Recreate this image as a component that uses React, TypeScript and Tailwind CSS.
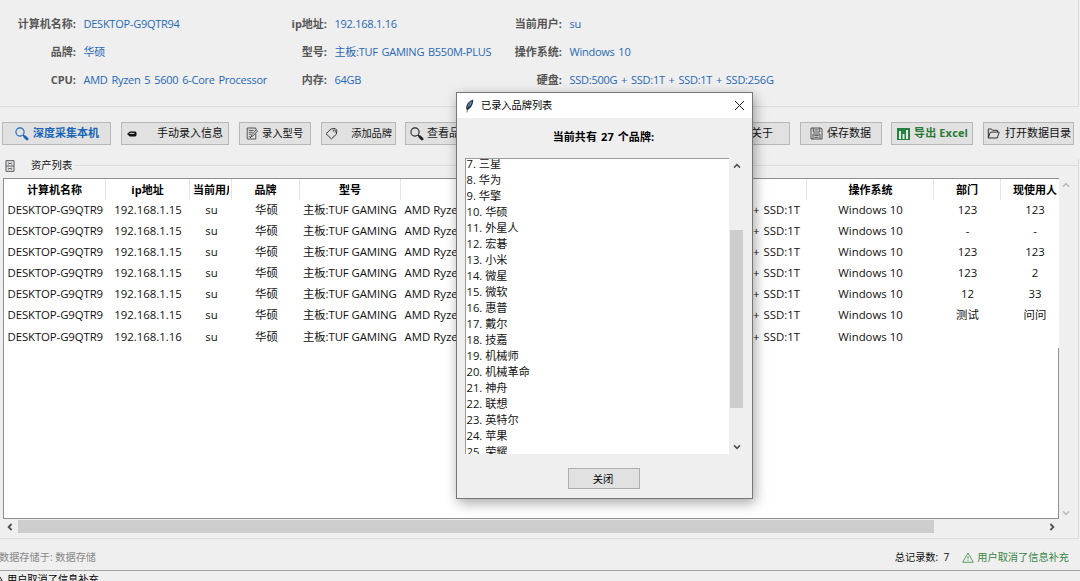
import type { ReactNode } from "react"
import clsx from "clsx"

const info = [
  ["计算机名称:", "DESKTOP-G9QTR94", "ip地址:", "192.168.1.16", "当前用户:", "su"],
  ["品牌:", "华硕", "型号:", "主板:TUF GAMING B550M-PLUS", "操作系统:", "Windows 10"],
  ["CPU:", "AMD Ryzen 5 5600 6-Core Processor", "内存:", "64GB", "硬盘:", "SSD:500G + SSD:1T + SSD:1T + SSD:256G"],
]

const headers = ["计算机名称", "ip地址", "当前用户", "品牌", "型号", "CPU", "硬盘", "操作系统", "部门", "现使用人"]

const rows = [
  { ip: "192.168.1.15", dept: "123", user: "123" },
  { ip: "192.168.1.15", dept: "-", user: "-" },
  { ip: "192.168.1.15", dept: "123", user: "123" },
  { ip: "192.168.1.15", dept: "123", user: "2" },
  { ip: "192.168.1.15", dept: "12", user: "33" },
  { ip: "192.168.1.15", dept: "测试", user: "问问" },
  { ip: "192.168.1.16", dept: "", user: "" },
]

const brands = [
  "7. 三星", "8. 华为", "9. 华擎", "10. 华硕", "11. 外星人", "12. 宏碁", "13. 小米", "14. 微星", "15. 微软", "16. 惠普",
  "17. 戴尔", "18. 技嘉", "19. 机械师", "20. 机械革命", "21. 神舟", "22. 联想", "23. 英特尔", "24. 苹果", "25. 荣耀",
]

const columns = "grid grid-cols-[102px_84px_42px_68px_101px_199px_207px_127px_67px_58px]"

function Magnifier({ className }: { className?: string }) {
  return (
    <svg width="14" height="14" viewBox="0 0 14 14" fill="none" stroke="currentColor" className={className}>
      <circle cx="5" cy="5" r="4.1" strokeWidth="1.1" />
      <path d="M8 8l1.5 1.5" strokeWidth="1.2" />
      <path d="M9.8 9.8l2.3 2.3" strokeWidth="2.8" strokeLinecap="round" />
    </svg>
  )
}

function Pencil() {
  return (
    <svg width="10" height="6" viewBox="0 0 10 6">
      <path d="M0 3l2.8-2.4h5.4a1.4 1.4 0 0 1 1.3 1.4v2a1.4 1.4 0 0 1-1.3 1.4H2.8z" fill="#111" />
      <path d="M2.4 2.4h5" stroke="#ddd" strokeWidth="1" />
    </svg>
  )
}

function Memo() {
  return (
    <svg width="12" height="13" viewBox="0 0 12 13" fill="none" stroke="#444" strokeWidth=".9">
      <path d="M9.8 6.5V12H1.2V1h8.6v1.5M2.8 3.4h5M2.8 5.3h3.8M2.8 7.2h2.4M2.8 9.8h1.8" />
      <path d="M5.2 9.8l.6-2 4.4-5 1.4 1.1-4.5 5zM5.2 9.8L4 11" />
    </svg>
  )
}

function Tag() {
  return (
    <svg width="13" height="13" viewBox="0 0 13 13" fill="none" stroke="#333" strokeWidth="1">
      <path d="M6 2l4-.6 1.8 1.8-.4 4-5 4.7L1 6.7z" strokeLinejoin="round" />
      <path d="M8.2 4.6c-.2-1.2.6-1.9 1.6-1.5.9.4.9 1.6.2 2.4" />
    </svg>
  )
}

function Floppy() {
  return (
    <svg width="13" height="13" viewBox="0 0 13 13" fill="none" stroke="#444" strokeWidth=".9">
      <path d="M1 1h10l1 1v10H1zM3.3 1v4h6.4V1M3 12V7h7v5M4.5 2.9h4M4.3 8.6h4.4M4.3 10.3h4.4" />
    </svg>
  )
}

function Chart() {
  return (
    <svg width="13" height="12" viewBox="0 0 13 12">
      <path d="M0 0h13v12H0z" fill="#268040" />
      <path d="M2 3h2v8H2zM5.5 6h2v5h-2zM9 2h2v9H9z" fill="#e4e9e4" />
    </svg>
  )
}

function Folder() {
  return (
    <svg width="13" height="11" viewBox="0 0 13 11" fill="none" stroke="#333" strokeWidth="1" strokeLinejoin="round">
      <path d="M1.3 10V1h3.2l1 1.3h5v1.8M1.3 10l2.1-5.9h8.8L10.3 10z" />
    </svg>
  )
}

function Cabinet() {
  return (
    <svg width="10" height="12" viewBox="0 0 10 12" fill="none" stroke="#555" strokeWidth="1">
      <path d="M1 .7h8v10.6H1zM1 6h8" />
      <path d="M3.3 2.3v2.4M6.7 2.3v2.4M3.3 7.5v2.4M6.7 7.5v2.4" stroke="#6f7c88" />
      <path d="M4 3.4h2M4 8.6h2" />
    </svg>
  )
}

function Feather() {
  return (
    <svg width="9" height="14" viewBox="0 0 9 14">
      <path d="M8.2.4C5 1.2 1.6 4.4 1.2 7.8c-.1 1.2 0 2 .7 3.2C5.6 9.8 8.6 5 8.2.4z" fill="#1d2f42" />
      <path d="M7.4 1.2C4.6 2.8 2.4 5.4 2.2 9.3 4.8 7.5 6.9 4.6 7.4 1.2z" fill="#7db4e4" />
      <path d="M7 2C4.3 5 2.5 8.5 1.9 13.4" stroke="#111" strokeWidth=".6" fill="none" />
    </svg>
  )
}

function Chevron({ d, color = "#505050", width = 1.5 }: { d: string; color?: string; width?: number }) {
  return (
    <svg width="8" height="8" viewBox="0 0 8 8" fill="none" stroke={color} strokeWidth={width} className="shrink-0">
      <path d={d} />
    </svg>
  )
}

const UP = "M1 5.6l3-3 3 3"
const DOWN = "M1 2.4l3 3 3-3"
const LEFT = "M5.6 1l-3 3 3 3"
const RIGHT = "M2.4 1l3 3-3 3"

function ToolButton({ className, children }: { className?: string; children?: ReactNode }) {
  return (
    <button
      className={clsx(
        "flex h-[23px] shrink-0 items-center border border-[#b7b7b7] bg-[#e1e1e1] text-[11px] whitespace-nowrap text-[#111]",
        className
      )}
    >
      {children}
    </button>
  )
}

function Cell({ className, children }: { className?: string; children?: ReactNode }) {
  return <div className={clsx("overflow-hidden whitespace-nowrap", className)}>{children}</div>
}

function BrandDialog() {
  return (
    <div className="absolute top-[92px] left-[456px] flex h-[407px] w-[297px] flex-col border border-[#777] bg-[#efefef] shadow-[2px_4px_12px_rgba(0,0,0,0.35)]">
      {/* Title bar */}
      <div className="flex h-[25px] shrink-0 items-center bg-white pr-[7px] pl-[8px]">
        <Feather />
        <span className="ml-[7px] text-[10.2px] text-black">已录入品牌列表</span>
        <svg width="11" height="11" viewBox="0 0 11 11" stroke="#222" strokeWidth="1" className="ml-auto">
          <path d="M1 1l9 9M10 1l-9 9" />
        </svg>
      </div>
      <div className="flex h-[40px] shrink-0 items-center justify-center pr-[2px] pb-[2px] text-[11px] font-bold tracking-[0.1px] text-black [word-spacing:1px]">
        当前共有 27 个品牌:
      </div>

      {/* Brand list */}
      <div className="ml-[8px] flex h-[296px] shrink-0">
        <div className="w-[264px] overflow-hidden border-t border-l border-[#9a9a9a] bg-white pl-px">
          <div className="-mt-[3px] -ml-[0.5px] text-[11.2px] leading-[16px] text-[#111]">
            {brands.map((brand) => (
              <div key={brand}>{brand}</div>
            ))}
          </div>
        </div>
        <div className="flex w-[15px] flex-col items-center pt-[4px] pb-[3px]">
          <Chevron d={UP} />
          <div className="mt-[60px] h-[178px] w-[13px] bg-[#cdcdcd]" />
          <div className="mt-auto flex">
            <Chevron d={DOWN} />
          </div>
        </div>
      </div>

      <button className="mt-[14px] ml-[111px] h-[21px] w-[72px] border border-[#adadad] bg-[#e1e1e1] pr-[2px] text-[10.3px] leading-[18px] text-black">
        关闭
      </button>
    </div>
  )
}

export default function App() {
  return (
    <div className="relative flex h-[581px] w-[1080px] flex-col overflow-hidden bg-[#efefef] font-['Open_Sans','Noto_Sans_CJK_SC',sans-serif] text-[11px] text-[#111]">
      {/* Computer info */}
      <section className="mr-px grid h-[107px] shrink-0 grid-cols-[76px_204px_47px_180px_55px_1fr] content-start border-r border-b border-[#dcdcdc] pt-[10px]">
        {info.flat().map((text, i) => (
          <div
            key={i}
            className={clsx(
              "h-[28px] leading-[28px] whitespace-nowrap",
              i % 2 === 0
                ? "text-right font-bold text-[#555]"
                : "pl-[7.5px] tracking-[-0.25px] text-[#1f68b5] [word-spacing:1.2px]"
            )}
          >
            {text}
          </div>
        ))}
      </section>

      {/* Toolbar */}
      <div className="flex h-[52px] shrink-0 items-start pt-[15px] pl-[2px]">
        <ToolButton className="w-[109px] pl-[12px] font-bold !text-[#1763b6]">
          <Magnifier className="mr-[4px]" />
          深度采集本机
        </ToolButton>
        <ToolButton className="ml-[10px] w-[108px] justify-between pr-[5px] pl-[5px]">
          <Pencil />
          手动录入信息
        </ToolButton>
        <ToolButton className="ml-[10px] w-[72px] pl-[6px]">
          <Memo />
          <span className="ml-[4px] text-[10.3px]">录入型号</span>
        </ToolButton>
        <ToolButton className="ml-[10px] w-[75px] justify-between pr-[3px] pl-[3px]">
          <Tag />
          <span className="text-[10.2px]">添加品牌</span>
        </ToolButton>
        <ToolButton className="ml-[9px] w-[82px] pl-[4px] !text-[#222]">
          <Magnifier className="mr-[3px]" />
          查看品牌
        </ToolButton>
        <ToolButton className="mr-[10px] ml-auto w-[72px] justify-end pr-[16px]">关于</ToolButton>
        <ToolButton className="w-[82px] pl-[9px]">
          <Floppy />
          <span className="ml-[4px]">保存数据</span>
        </ToolButton>
        <ToolButton className="ml-[9px] w-[82px] pl-[5px] font-bold !text-[#2b7b35]">
          <Chart />
          <span className="ml-[4px] tracking-[0.15px]">导出 Excel</span>
        </ToolButton>
        <ToolButton className="mr-[6px] ml-[10px] w-[91px] pl-[3px]">
          <Folder />
          <span className="ml-[5px]">打开数据目录</span>
        </ToolButton>
      </div>

      {/* Asset list */}
      <section className="mr-px flex h-[380px] shrink-0 flex-col border-r border-b border-[#dcdcdc]">
        <div className="flex h-[13px] shrink-0 items-center pl-[5px]">
          <Cabinet />
          <span className="mr-[2px] ml-[16px] text-[10.3px] leading-none">资产列表</span>
          <div className="h-px flex-1 bg-[#dcdcdc]" />
        </div>
        <div className="mt-[6px] ml-[3px] flex h-[341px] shrink-0">
          <div className="relative flex w-[1056px] flex-col border-t border-b border-l border-[#8f8f8f] bg-white">
            <div className={clsx(columns, "h-[21px] shrink-0 overflow-hidden font-bold text-black")}>
              {headers.map((h) => (
                <div
                  key={h}
                  className={clsx(
                    "overflow-hidden border-r border-[#e5e5e5] text-center leading-[21px] whitespace-nowrap last:border-r-0",
                    h === "当前用户" && "pr-[2px] pl-[3px]",
                    h === "操作系统" && "pl-px",
                    h === "现使用人" && "pl-[10px]"
                  )}
                >
                  <div className="overflow-hidden">{h}</div>
                </div>
              ))}
            </div>
            {rows.map((row, i) => (
              <div key={i} className={clsx(columns, "h-[21.1px] shrink-0 overflow-hidden text-[11.4px] leading-[20.6px]")}>
                <Cell className="mr-[3px] pl-[3.5px] tracking-[-0.1px]">DESKTOP-G9QTR94</Cell>
                <Cell className="text-center">{row.ip}</Cell>
                <Cell className="pl-px text-center">su</Cell>
                <Cell className="pl-px text-center">华硕</Cell>
                <Cell className="mr-[2px] pl-[3px] tracking-[-0.1px]">主板:TUF GAMING B550M-PLUS</Cell>
                <Cell className="mr-[3px] pl-[3.5px]">AMD Ryzen 5 5600 6-Core Processor</Cell>
                <Cell className="pr-[7px] text-right [word-spacing:1px]">SSD:500G + SSD:1T + SSD:1T</Cell>
                <Cell className="text-center">Windows 10</Cell>
                <Cell className="text-center">{row.dept}</Cell>
                <div className="pl-[10px] text-center">{row.user}</div>
              </div>
            ))}
            {/* Right edge is only visible below the last row */}
            <div className="ml-auto w-px flex-1 bg-[#8f8f8f]" />
          </div>
          <div className="flex flex-1 flex-col items-center justify-between pt-[3px] pr-[5px] pb-[2px]">
            <Chevron d={UP} color="#bcbcbc" />
            <Chevron d={DOWN} color="#bcbcbc" />
          </div>
        </div>
        <div className="mt-px ml-[3px] flex h-[13px] w-[1056px] shrink-0 items-center pr-[3px] pl-[3px]">
          <Chevron d={LEFT} width={1.8} />
          <div className="ml-[4px] h-[13px] w-[916px] bg-[#cdcdcd]" />
          <div className="ml-auto">
            <Chevron d={RIGHT} width={1.8} />
          </div>
        </div>
      </section>

      {/* Status line */}
      <footer className="flex h-[32px] shrink-0 items-center border-b border-[#a5a5a5] pt-[6px] pr-[11px] text-[10.2px]">
        <span className="-ml-px text-[#888]">数据存储于: 数据存储</span>
        <span className="ml-auto">总记录数:&nbsp; 7</span>
        <svg width="12" height="11" viewBox="0 0 12 11" fill="none" stroke="#4c9656" strokeWidth=".9" className="mr-[3px] ml-[13px]">
          <path d="M6 1L11.3 10.3H.7zM6 4v3.2M6 8.2v.9" />
        </svg>
        <span className="text-[#378443]">用户取消了信息补充</span>
      </footer>
      <div className="flex h-[10px] shrink-0 items-start overflow-hidden pt-px text-[10.2px] leading-[14px] text-black">
        <svg width="3" height="11" viewBox="0 0 3 11" fill="none" stroke="#222" className="mr-[4px]">
          <path d="M0 5l2.2 4H0" />
        </svg>
        用户取消了信息补充
      </div>

      <BrandDialog />
    </div>
  )
}
